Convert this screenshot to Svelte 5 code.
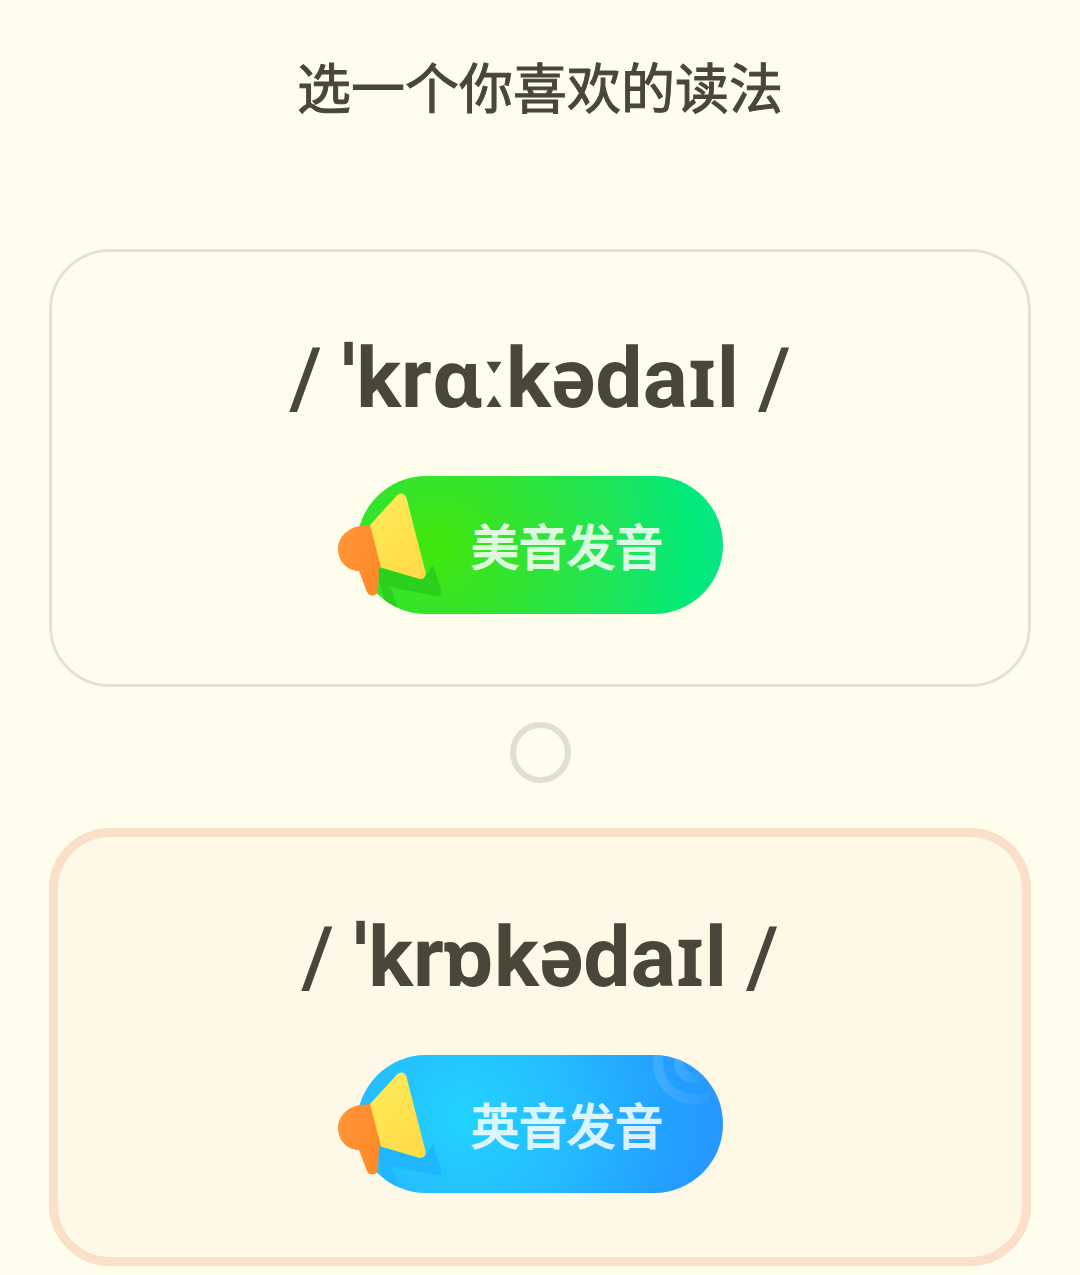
<script lang="ts">
  const options = [
    { id: 'us', start: 'ˈkr', vowel: 'ɑ', end: 'ːkədaɪl', label: '美音发音', selected: false },
    { id: 'uk', start: 'ˈkr', vowel: 'ɒ', end: 'kədaɪl', label: '英音发音', selected: true },
  ];
</script>

<main>
  <h1>选一个你喜欢的读法</h1>

  {#each options as option}
    <section class="card {option.id}" class:selected={option.selected}>
      <p class="phonetic">
        <span class="slash">/</span>
        <span>{option.start}<span class="vowel">{option.vowel}</span>{option.end}</span>
        <span class="slash">/</span>
      </p>
      <button class="play">
        <svg class="art" width="386" height="138" viewBox="0 0 386 138" aria-hidden="true">
          <defs>
            <linearGradient id="horn-{option.id}" x1="0" y1="0" x2="0.6" y2="1">
              <stop offset="0" stop-color="#ffec5c" />
              <stop offset="1" stop-color="#ffdc48" />
            </linearGradient>
            <linearGradient id="grip-{option.id}" x1="0" y1="0" x2="1" y2="0.3">
              <stop offset="0" stop-color="#ff9638" />
              <stop offset="1" stop-color="#ff8a2a" />
            </linearGradient>
            <linearGradient id="ripple-{option.id}" x1="0" y1="0" x2="1" y2="0">
              <stop offset="0" stop-color="#69beff" stop-opacity="0.38" />
              <stop offset="0.75" stop-color="#69beff" stop-opacity="0.05" />
            </linearGradient>
            <clipPath id="pill-{option.id}">
              <rect x="20" width="366" height="138" rx="69" />
            </clipPath>
          </defs>
          <g clip-path="url(#pill-{option.id})">
            <path class="shade" d="M38 91 L84 102 Q88 102 90 98 L96 89 L104 114 Q106 121 99 120 L53 111 L61 131 L50 132 Z" />
            {#if option.id === 'uk'}
              <circle class="ripple" cx="357" cy="8" r="36" stroke="url(#ripple-uk)" />
              <circle class="ripple" cx="357" cy="8" r="15" stroke="url(#ripple-uk)" />
            {/if}
          </g>
          <path
            fill="url(#grip-{option.id})"
            d="M34 49 L23 50 C11 52 1 61 1 73 C1 86 11 95 22 95 L30 116 Q32 120 36 119.500 Q40 119 41 115 L42 92 L44 91 Z"
          />
          <path
            fill="url(#horn-{option.id})"
            d="M33 49 L60 19.500 C63 16 68 17 69.500 22 L88.500 96 C89.500 101 86 104 81 102.500 L44 91.500 Z"
          />
        </svg>
        <span class="label">{option.label}</span>
      </button>
    </section>
    {#if !option.selected}
      <span class="radio"></span>
    {/if}
  {/each}
</main>

<style>
  :global(body) {
    background: #fffdec;
  }

  main {
    box-sizing: border-box;
    height: 1275px;
    padding: 0 49px;
    display: flex;
    flex-direction: column;
    align-items: center;
    overflow: hidden;
    color: #49463a;
    font-family: 'Noto Sans CJK SC', sans-serif;
  }

  h1 {
    flex: none;
    margin: 46px 0 123px;
    font-size: 54px;
    font-weight: 400;
    line-height: 80px;
    -webkit-text-stroke: 1px #49463a;
  }

  .card {
    box-sizing: border-box;
    flex: none;
    width: 982px;
    height: 438px;
    padding-top: 77px;
    border: 3px solid #e5e2d3;
    border-radius: 61px;
    display: flex;
    flex-direction: column;
    align-items: center;
  }

  .card.selected {
    padding-top: 71px;
    border: 9px solid #fae0c8;
    background: #fef8e7;
  }

  .phonetic {
    margin: 0;
    height: 100px;
    display: flex;
    align-items: center;
    gap: 19px;
    font-family: Roboto, 'Noto Sans', sans-serif;
    font-size: 84px;
    font-weight: 700;
    line-height: 100px;
    white-space: nowrap;
  }

  .slash {
    font-weight: 500;
  }

  .vowel {
    font-size: 79px;
    line-height: 1;
  }

  .play {
    position: relative;
    width: 366px;
    height: 138px;
    margin-top: 47px;
    padding: 0 0 2px 54px;
    border: none;
    border-radius: 69px;
    color: #fff;
    font-family: inherit;
    font-size: 48px;
    font-weight: 400;
    line-height: 70px;
  }

  .us .play {
    background: radial-gradient(circle at 80px 70px, #42e70b 0, #34e42c 75px, #1fe559 180px, #00ea7b 260px, #0ce28a 300px);
  }

  .uk .play {
    background: radial-gradient(circle at 108px 62px, #22d3ff 0, #25bdff 100px, #229fff 210px, #2795ff 270px);
  }

  /* the megaphone sticks out over the left end of the pill */
  .art {
    position: absolute;
    left: -20px;
    top: 0;
  }

  .us .shade {
    fill: #2bcf1e;
  }

  .uk .shade {
    fill: #1fb5ff;
  }

  .ripple {
    fill: none;
    stroke-width: 10;
  }

  .label {
    -webkit-text-stroke: 1.8px #fff;
    opacity: 0.84;
  }

  .radio {
    box-sizing: border-box;
    flex: none;
    width: 61px;
    height: 61px;
    margin: 35px 0 45px;
    border: 6px solid #e2dfd1;
    border-radius: 50%;
  }
</style>
